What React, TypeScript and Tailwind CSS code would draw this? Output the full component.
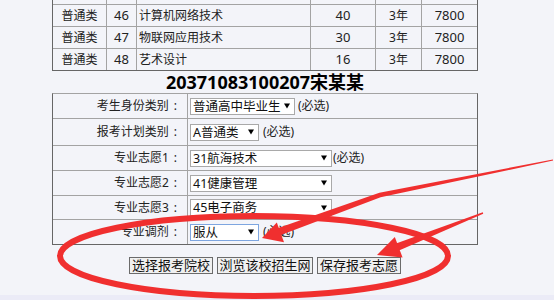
import React from 'react';

const majors = [
  ['普通类', '46', '计算机网络技术', '40', '3年', '7800'],
  ['普通类', '47', '物联网应用技术', '30', '3年', '7800'],
  ['普通类', '48', '艺术设计', '16', '3年', '7800'],
];

function Select({ w, label, focused = false }: { w: string; label: string; focused?: boolean }) {
  return (
    <div
      className={`${w} h-[17px] flex items-center justify-between whitespace-nowrap bg-white border pl-[2px] pr-[4px] text-[12.5px] leading-[15px] text-[#111] ${
        focused ? 'border-[#7ea6e0]' : 'border-[#a9a9a9]'
      }`}
    >
      <span>{label}</span>
      <svg width="6" height="6" viewBox="0 0 6 6" className="shrink-0">
        <polygon points="0,0.5 6,0.5 3,5.5" fill="#000" />
      </svg>
    </div>
  );
}

const formRows = [
  { label: '考生身份类别', h: 'h-[25px] border-b', field: <Select w="w-[105px]" label="普通高中毕业生" />, note: 'ml-[3px]' },
  { label: '报考计划类别', h: 'h-[27px] border-b', field: <Select w="w-[69px]" label="A普通类" />, note: 'ml-[4px]' },
  { label: '专业志愿1', h: 'h-[25px] border-b', field: <Select w="w-[142px]" label="31航海技术" />, note: 'ml-[1px]' },
  { label: '专业志愿2', h: 'h-[25px] border-b', field: <Select w="w-[142px]" label="41健康管理" />, note: '' },
  { label: '专业志愿3', h: 'h-[24px] border-b', field: <Select w="w-[142px]" label="45电子商务" />, note: '' },
  { label: '专业调剂', h: 'h-[24px]', field: <Select w="w-[69px]" label="服从" focused />, note: 'ml-[4px]' },
];

export default function App() {
  return (
    <div className="relative w-[554px] h-[300px] overflow-hidden bg-[#f3f4f9] flex flex-col font-['Noto_Sans','Noto_Sans_CJK_SC',sans-serif] text-[#222]">
      <div className="ml-[52px] w-[426px]">
        {/* major list, scrolled so only the last rows show */}
        <div className="grid grid-cols-[54px_30px_174px_65px_46px_55px] border-l border-r border-b border-[#666]">
          {[0, 1, 2, 3, 4, 5].map((i) => (
            <div key={`p${i}`} className={`h-[5px] border-b border-[#a3a3a3] ${i < 5 ? 'border-r' : ''}`} />
          ))}
          {majors.map((row, r) =>
            row.map((cell, c) => (
              <div
                key={`${r}-${c}`}
                className={`flex items-center border-[#a3a3a3] ${r < 2 ? 'h-[22px] border-b' : 'h-[21px]'} ${c < 5 ? 'border-r' : ''} ${
                  c === 2 ? 'justify-start pl-[2px]' : 'justify-center'
                } ${c === 1 || c === 3 || c === 5 ? 'text-[13px]' : 'text-[12px]'}`}
              >
                {cell}
              </div>
            ))
          )}
        </div>

        <div className="h-[22px] flex items-center justify-center text-[18px] leading-[20px] font-bold text-black">
          20371083100207宋某某
        </div>

        <div className="grid grid-cols-[135px_1fr] border border-[#666] border-t-[#a3a3a3]">
          {formRows.map((row) => (
            <React.Fragment key={row.label}>
              <div className={`${row.h} border-r border-[#a3a3a3] flex items-center justify-end pr-[10px] text-[12px]`}>
                {row.label}
                <span className="ml-[5px]">:</span>
              </div>
              <div className={`${row.h} border-[#a3a3a3] flex items-center pl-[2px]`}>
                {row.field}
                {row.note && <span className={`${row.note} text-[12px]`}>(必选)</span>}
              </div>
            </React.Fragment>
          ))}
        </div>

        <div className="mt-[12px] flex justify-center gap-[4px]">
          {[
            ['选择报考院校', 'w-[84px]'],
            ['浏览该校招生网', 'w-[96px]'],
            ['保存报考志愿', 'w-[84px]'],
          ].map(([t, w]) => (
            <button
              key={t}
              className={`${w} h-[17px] flex items-end justify-center border border-[#6b6b6b] bg-[#f0f0f0] text-[13px] leading-[15px] text-[#111]`}
            >
              {t}
            </button>
          ))}
        </div>
      </div>

      <div className="mt-auto h-[5px] bg-[#ebebf7]" />

      {/* red hand-drawn annotation */}
      <svg className="absolute inset-0 pointer-events-none" width="554" height="300" viewBox="0 0 554 300">
        <ellipse cx="254" cy="256" rx="194" ry="40" fill="none" stroke="#f02f2f" strokeWidth="6" />
        <polygon
          points="280.3,235.3 380.6,197.2 553.1,160.6 552.9,159.4 379.4,192.8 277.5,228.3"
          fill="#f02f2f"
        />
        <polygon points="262,238 284,242.2 276.8,222.4" fill="#f02f2f" />
        <polygon points="399,250.4 483.2,213.8 482.8,212.2 396,243.4" fill="#f02f2f" />
        <polygon points="377,255 402.6,257.6 394.8,236.9" fill="#f02f2f" />
      </svg>
    </div>
  );
}
